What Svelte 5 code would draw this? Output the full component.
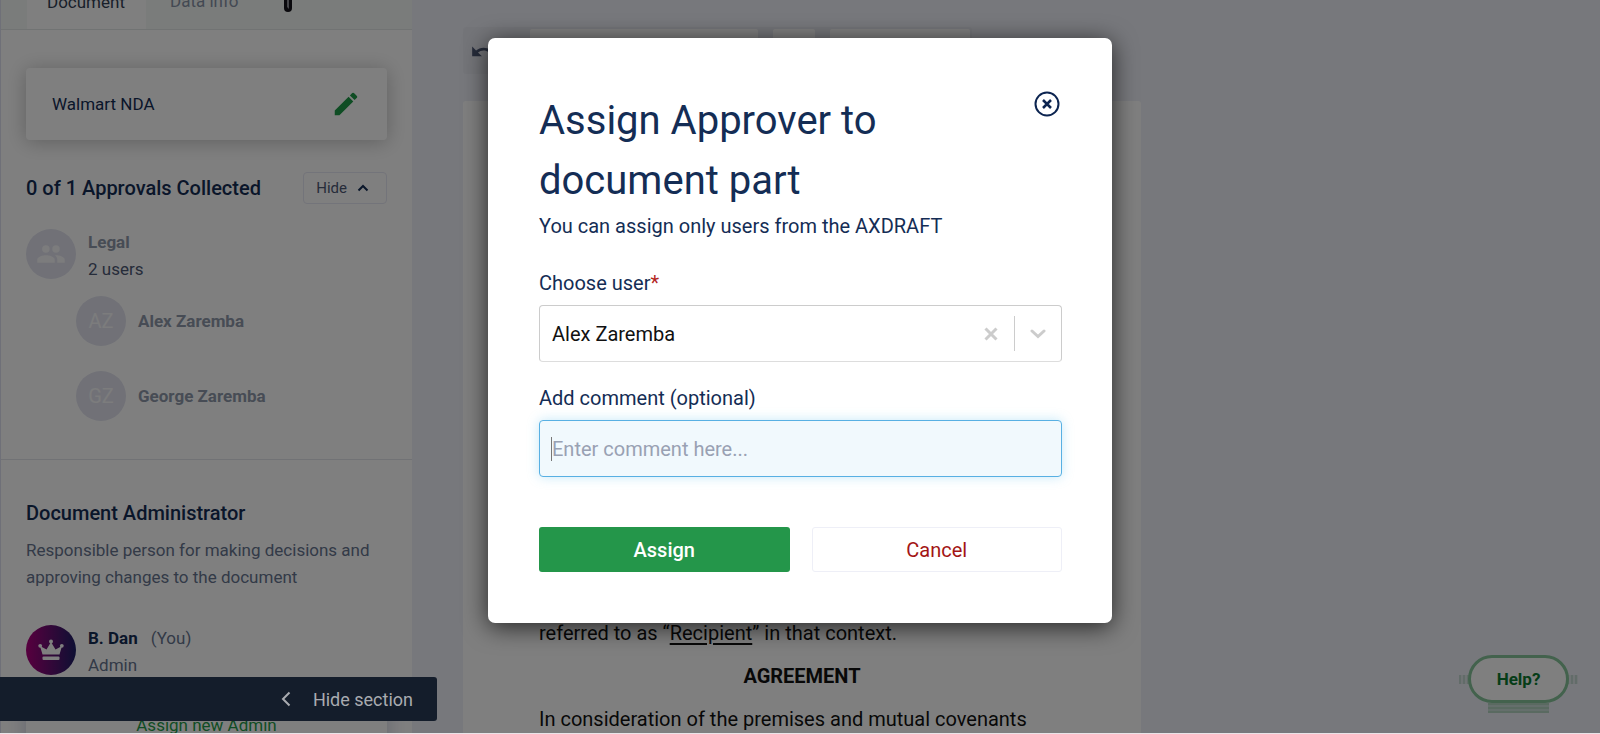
<script lang="ts">
  type Member = { initials: string; name: string };

  const members: Member[] = [
    { initials: 'AZ', name: 'Alex Zaremba' },
    { initials: 'GZ', name: 'George Zaremba' }
  ];

  let approver = $state('Alex Zaremba');
  let comment = $state('');
  let approvalsOpen = $state(true);
  let dialogOpen = $state(true);

  function closeDialog() {
    dialogOpen = false;
  }
</script>

<div class="app">
  <aside class="sidebar">
    <nav class="tabs">
      <button class="tab active">Document</button>
      <button class="tab">Data info</button>
      <svg class="marker" width="10" height="12" viewBox="0 0 10 12" aria-hidden="true">
        <path d="M1 0h8v8a4 4 0 0 1-8 0z" fill="#15131a" />
        <path d="M4 0v7l2 2V0z" fill="#8c8c94" />
      </svg>
    </nav>

    <section class="approvals">
      <div class="doc-card">
        <span>Walmart NDA</span>
        <button class="icon-button" aria-label="Rename document">
          <svg width="30" height="30" viewBox="0 0 24 24" fill="#1f9a48">
            <path d="M3 17.25V21h3.75L17.81 9.94l-3.75-3.75L3 17.25zM20.71 7.04a1 1 0 0 0 0-1.41l-2.34-2.34a1 1 0 0 0-1.41 0l-1.83 1.83 3.75 3.75 1.83-1.83z" />
          </svg>
        </button>
      </div>

      <div class="approvals-head">
        <h2>0 of 1 Approvals Collected</h2>
        <button class="hide-button" onclick={() => (approvalsOpen = !approvalsOpen)}>
          Hide
          <svg width="12" height="8" viewBox="0 0 12 8" fill="none" stroke="#142d55" stroke-width="2">
            <path d="M1.5 6.5 6 2l4.5 4.5" />
          </svg>
        </button>
      </div>

      {#if approvalsOpen}
        <div class="person">
          <div class="avatar">
            <svg width="30" height="30" viewBox="0 0 24 24" fill="#f8f8fa">
              <circle cx="7.9" cy="8" r="3" />
              <circle cx="16" cy="8" r="3" />
              <path d="M8 13c-2.330 0-7 1.170-7 3.500V19h14v-2.500C15 14.170 10.330 13 8 13zM16 13c-.29 0-.62.020-.97.050C16.190 13.890 17 15.020 17 16.500V19h6v-2.500C23 14.170 18.330 13 16 13z" />
            </svg>
          </div>
          <div class="person-text">
            <strong class="muted">Legal</strong>
            <span class="count">2 users</span>
          </div>
        </div>
        <ul class="members">
          {#each members as member}
            <li>
              <div class="avatar">{member.initials}</div>
              <strong class="muted">{member.name}</strong>
            </li>
          {/each}
        </ul>
      {/if}
    </section>

    <section class="admin">
      <h2>Document Administrator</h2>
      <p>Responsible person for making decisions and approving changes to the document</p>
      <div class="person">
        <div class="avatar crown">
          <svg width="26" height="22" viewBox="0 0 26 22" fill="#fff">
            <path d="M4.5 15.5 2 7l6.500 3.500L13 3l4.500 7.500L24 7l-2.500 8.500z" />
            <circle cx="2.200" cy="6.800" r="1.900" />
            <circle cx="13" cy="2.500" r="2" />
            <circle cx="23.800" cy="6.800" r="1.900" />
            <rect x="4.500" y="17.500" width="17" height="3.500" rx="1" />
          </svg>
        </div>
        <div class="person-text">
          <span><strong>B. Dan</strong><span class="you">(You)</span></span>
          <span class="role">Admin</span>
        </div>
      </div>
      <button class="assign-admin">Assign new Admin</button>
    </section>
  </aside>

  <main class="workspace">
    <div class="toolbar">
      <button class="undo" aria-label="Undo">
        <svg width="26" height="26" viewBox="0 0 24 24" fill="#4d5875">
          <path d="M12.500 8c-2.650 0-5.050.99-6.900 2.600L2 7v9h9l-3.620-3.620A7.960 7.960 0 0 1 12.500 10.500c3.540 0 6.550 2.310 7.600 5.500l2.370-.78C21.080 11.030 17.150 8 12.500 8z" />
        </svg>
      </button>
      <div class="tool wide"></div>
      <div class="tool small"></div>
      <div class="tool medium"></div>
    </div>
    <article class="paper">
      <p>referred to as “<u>Recipient</u>” in that context.</p>
      <h3>AGREEMENT</h3>
      <p>In consideration of the premises and mutual covenants</p>
    </article>
  </main>

  <button class="help">Help?</button>

  {#if dialogOpen}
    <div class="overlay">
      <div class="dialog" role="dialog" aria-modal="true" aria-labelledby="dialog-title">
        <header>
          <h1 id="dialog-title">Assign Approver to document part</h1>
          <button class="close" aria-label="Close" onclick={closeDialog}>
            <svg width="26" height="26" viewBox="0 0 26 26" fill="none" stroke="#0c2450">
              <circle cx="13" cy="13" r="11.500" stroke-width="2" />
              <path d="m9 9 8 8M17 9l-8 8" stroke-width="2.500" />
            </svg>
          </button>
        </header>
        <p class="subtitle">You can assign only users from the AXDRAFT</p>

        <label for="approver">Choose user<span class="required">*</span></label>
        <div class="select-box">
          <select id="approver" bind:value={approver}>
            <option value=""></option>
            {#each members as member}
              <option value={member.name}>{member.name}</option>
            {/each}
          </select>
          <button class="clear" aria-label="Clear user" onclick={() => (approver = '')}>
            <svg width="14" height="14" viewBox="0 0 14 14" fill="none" stroke="#ccc" stroke-width="3">
              <path d="m1.500 1.500 11 11M12.500 1.500l-11 11" />
            </svg>
          </button>
          <span class="separator"></span>
          <svg class="chevron" width="16" height="10" viewBox="0 0 16 10" fill="none" stroke="#ccc" stroke-width="3" stroke-linecap="round">
            <path d="m2 2 6 5.500L14 2" />
          </svg>
        </div>

        <label for="comment">Add comment (optional)</label>
        <div class="comment-box">
          <input id="comment" type="text" placeholder="Enter comment here..." bind:value={comment} />
          <span class="caret"></span>
        </div>

        <footer>
          <button class="assign" onclick={closeDialog}>Assign</button>
          <button class="cancel" onclick={closeDialog}>Cancel</button>
        </footer>
      </div>
    </div>
  {/if}

  <button class="hide-section">
    <svg width="10" height="16" viewBox="0 0 10 16" fill="none" stroke="#a9abb0" stroke-width="2">
      <path d="M8.500 1.500 2 8l6.500 6.500" />
    </svg>
    Hide section
  </button>
</div>

<style>
  :global(body) {
    margin: 0;
    background: #e9e4e8;
  }

  .app,
  .app * {
    box-sizing: border-box;
  }

  .app {
    position: relative;
    z-index: 0;
    display: flex;
    height: calc(100vh - 1px);
    overflow: hidden;
    background: #eff1f9;
    color: #142d55;
    font-family: Roboto, sans-serif;
    font-size: 17px;
    line-height: 27px;
  }

  h1,
  h2,
  h3,
  p,
  ul {
    margin: 0;
    padding: 0;
  }

  button {
    padding: 0;
    border: 0;
    background: none;
    color: inherit;
    font: inherit;
    cursor: pointer;
  }

  strong {
    font-weight: 700;
  }

  svg {
    display: block;
    flex: none;
  }

  /* sidebar */
  .sidebar {
    flex: none;
    width: 412px;
    background: #fff;
    border-left: 1px solid #dfe0f0;
  }

  .tabs {
    display: flex;
    align-items: flex-end;
    height: 30px;
    padding-left: 26px;
    overflow: hidden;
    background: #f4f8f6;
    border-bottom: 1px solid #e2e6e6;
  }

  .tab {
    height: 60px;
    padding: 4px 22px 0 24px;
    color: #8792a6;
  }

  .tab.active {
    padding: 4px 21px 0 20px;
    margin-bottom: -1px;
    background: #fff;
    color: #333f55;
  }

  .marker {
    align-self: flex-start;
    margin-left: 22px;
  }

  .approvals {
    padding: 38px 25px 38px;
    border-bottom: 1px solid #e3e5ea;
  }

  .doc-card {
    display: flex;
    align-items: center;
    justify-content: space-between;
    height: 72px;
    padding: 0 26px;
    border-radius: 4px;
    box-shadow: 0 2px 20px rgba(0, 0, 0, 0.25);
  }

  .approvals-head {
    display: flex;
    align-items: center;
    justify-content: space-between;
    margin: 32px 0 25px;
  }

  h2 {
    font-size: 20px;
    font-weight: 500;
  }

  .hide-button {
    display: flex;
    align-items: center;
    gap: 10px;
    height: 32px;
    padding: 0 17px 0 12px;
    border: 1px solid #e6e8f4;
    border-radius: 4px;
    color: #4d5875;
    font-size: 15px;
  }

  .person {
    display: flex;
    gap: 12px;
  }

  .avatar {
    display: flex;
    flex: none;
    align-items: center;
    justify-content: center;
    width: 50px;
    height: 50px;
    border-radius: 50%;
    background: #e2e3ef;
    color: #f8f8fa;
    font-size: 20px;
  }

  .person-text {
    display: flex;
    flex-direction: column;
  }

  .muted {
    color: #8f99aa;
  }

  .count {
    color: #4d5875;
  }

  .members {
    display: grid;
    gap: 25px;
    margin-top: 13px;
    padding-left: 50px;
    list-style: none;
  }

  .members li {
    display: flex;
    align-items: center;
    gap: 12px;
  }

  .admin {
    padding: 40px 25px 0;
  }

  .admin p {
    margin: 10px 0 34px;
    color: #66748f;
  }

  .crown {
    background: linear-gradient(90deg, #b0007e, #1c1f66);
  }

  .you {
    margin-left: 13px;
    color: #66748f;
  }

  .role {
    color: #66748f;
  }

  .assign-admin {
    width: 100%;
    height: 60px;
    margin-top: 16px;
    border-radius: 4px;
    box-shadow: 0 2px 20px rgba(40, 50, 120, 0.25);
    color: #1f9a48;
  }

  .hide-section {
    position: absolute;
    left: 0;
    bottom: 12px;
    display: flex;
    align-items: center;
    justify-content: flex-end;
    gap: 22px;
    width: 437px;
    height: 44px;
    padding-right: 24px;
    border-radius: 0 3px 3px 0;
    background: #141d2b;
    color: #a9abb0;
    font-size: 18px;
  }

  /* document */
  .workspace {
    display: flex;
    flex: 1;
    flex-direction: column;
    align-items: flex-start;
    padding: 27px 51px 0;
  }

  .toolbar {
    display: flex;
    gap: 15px;
    height: 47px;
    padding: 2px;
    border-radius: 3px;
    background: #e8eaf3;
  }

  .undo {
    width: 50px;
    padding: 2px 0 0 5px;
  }

  .tool {
    background: #fff;
    border-radius: 2px;
  }

  .wide {
    width: 228px;
  }

  .small {
    width: 42px;
  }

  .medium {
    width: 140px;
  }

  .paper {
    display: flex;
    flex: 1;
    flex-direction: column;
    justify-content: flex-end;
    gap: 16px;
    width: 100%;
    max-width: 678px;
    margin-top: 27px;
    padding: 0 76px;
    border-radius: 3px 3px 0 0;
    background: #fff;
    color: #111;
    font-size: 20px;
  }

  .paper u {
    text-underline-offset: 3px;
  }

  h3 {
    font-size: 20px;
    font-weight: 700;
    text-align: center;
  }

  .help {
    position: absolute;
    right: 31px;
    bottom: 30px;
    width: 101px;
    height: 48px;
    border: 3px solid #86c59a;
    border-radius: 24px;
    background: #fff;
    color: #0b7a30;
    font-size: 17px;
    font-weight: 700;
  }

  .help::before {
    content: '';
    position: absolute;
    z-index: -1;
    top: 17px;
    right: -12px;
    left: -12px;
    height: 9px;
    background: repeating-linear-gradient(90deg, #c5d9d2 0 2px, #e0e8ea 2px 4px);
  }

  .help::after {
    content: '';
    position: absolute;
    right: 17px;
    bottom: -13px;
    left: 17px;
    height: 10px;
    background: repeating-linear-gradient(#b5d5c3 0 2px, #cbdfd8 2px 4px);
  }

  /* dialog */
  .overlay {
    position: absolute;
    inset: 0;
    display: flex;
    align-items: flex-start;
    justify-content: center;
    padding-top: 38px;
    background: rgba(0, 0, 0, 0.5);
  }

  .dialog {
    display: flex;
    flex-direction: column;
    width: 624px;
    max-width: 100%;
    padding: 51px 50px 51px 51px;
    border-radius: 7px;
    background: #fff;
    box-shadow: 0 4px 24px rgba(0, 0, 0, 0.7);
    font-size: 20px;
    line-height: 30px;
  }

  header {
    display: flex;
    align-items: flex-start;
    justify-content: space-between;
  }

  h1 {
    max-width: 400px;
    padding-top: 2px;
    font-size: 40px;
    font-weight: 400;
    line-height: 60px;
  }

  .close {
    margin: 2px 2px 0 0;
  }

  .subtitle {
    margin-bottom: 27px;
  }

  .required {
    color: #b3261e;
  }

  .select-box {
    display: flex;
    align-items: center;
    height: 57px;
    margin: 7px 0 21px;
    padding-right: 15px;
    border: 1px solid #ccc;
    border-bottom-color: #ddd;
    border-radius: 4px;
  }

  select {
    flex: 1;
    height: 100%;
    padding: 0 12px;
    border: 0;
    appearance: none;
    background: none;
    color: #111;
    font: inherit;
    outline: 0;
  }

  .separator {
    width: 1px;
    height: 35px;
    margin: 0 15px 0 16px;
    background: #ccc;
  }

  .comment-box {
    position: relative;
    margin: 7px 0 50px;
  }

  input {
    width: 100%;
    height: 57px;
    padding: 0 12px;
    border: 1px solid #58b0e3;
    border-radius: 4px;
    background: #f1f9fd;
    box-shadow: 0 0 12px rgba(90, 190, 235, 0.35);
    color: #111;
    font: inherit;
    outline: 0;
  }

  input::placeholder {
    color: #99a1b3;
    opacity: 1;
  }

  .caret {
    position: absolute;
    top: 17px;
    left: 12px;
    width: 1px;
    height: 24px;
    background: #777;
  }

  footer {
    display: grid;
    grid-template-columns: 1fr 1fr;
    gap: 22px;
  }

  footer button {
    height: 45px;
    border-radius: 3px;
  }

  .assign {
    background: #24964a;
    color: #fff;
    font-weight: 500;
  }

  .cancel {
    border: 1px solid #eeeff7;
    color: #a31515;
  }
</style>
